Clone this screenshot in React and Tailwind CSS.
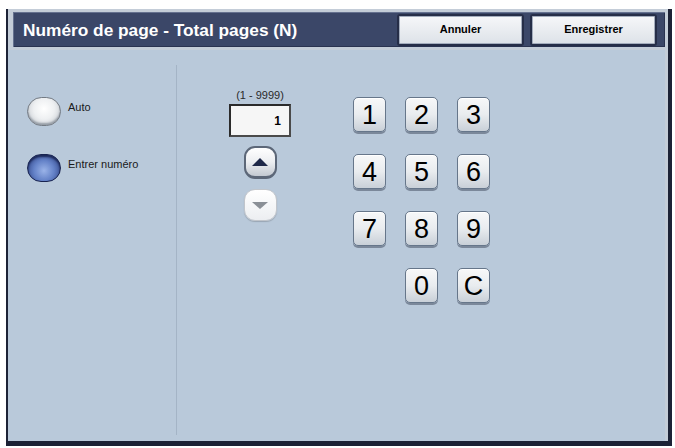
import React from 'react';

const keys = ['1', '2', '3', '4', '5', '6', '7', '8', '9'];

const Key = ({ label, className = '' }) => (
    <div className={`w-[33px] h-[35px] flex items-center justify-center rounded-[5px] border-[1.5px] border-[#66768a] bg-gradient-to-b from-[#f7f8f9] via-[#e9ecef] to-[#c9d0d8] shadow-[0_2px_0_#7b889a,inset_0_1px_0_#ffffff] text-[27px] leading-none text-black ${className}`}>
        <span className="pt-[2px]">{label}</span>
    </div>
);

const HeaderButton = ({ children }) => (
    <button className="w-[127px] h-[32px] rounded-[3px] border-2 border-[#262e48] bg-gradient-to-b from-[#f6f7f9] to-[#dde2e8] shadow-[inset_0_0_0_1px_#a4adbd] text-[11px] font-bold text-black">
        {children}
    </button>
);

export default function App() {
    return (
        <div className="w-[675px] h-[448px] bg-white pt-[9px] pl-[6px] font-['Liberation_Sans',Arial,sans-serif]">
            <div className="w-[666px] h-[437px] flex flex-col border-l-2 border-r-4 border-b-[5px] border-[#1c2236]">

                {/* title bar */}
                <div className="bg-[#c4cdd8] pt-[3px] pl-[5px] pr-[3px] pb-[3px]">
                    <div className="h-[35px] flex items-center justify-between pl-[10px] pr-[8px] bg-[#3b4768] shadow-[inset_1px_1px_0_#65718f,inset_-1px_-1px_0_#2a3350]">
                        <h1 className="text-white font-bold text-[17.3px] pt-[2px]">
                            Numéro de page - Total pages (N)
                        </h1>
                        <div className="flex gap-[6px]">
                            <HeaderButton>Annuler</HeaderButton>
                            <HeaderButton>Enregistrer</HeaderButton>
                        </div>
                    </div>
                </div>

                <div className="flex-1 flex bg-[#b9c9da] border-r-[3px] border-[#c4cdd8]">

                    {/* radio choices */}
                    <div className="w-[168px] pt-[47px] pl-[19px] flex flex-col gap-[28px]">
                        <div className="flex items-start gap-[7px]">
                            <div className="w-[34px] h-[29px] rounded-full border-[1.5px] border-[#737a83] bg-[radial-gradient(circle_at_50%_40%,#ffffff_0%,#eef0f2_45%,#bcc1c8_100%)] shadow-[inset_0_-2px_2px_#959ca5]" />
                            <span className="mt-[4px] text-[11px] leading-[13px] text-[#1a1a1a]">Auto</span>
                        </div>
                        <div className="flex items-start gap-[7px]">
                            <div className="w-[34px] h-[28px] rounded-full border-[1.5px] border-[#182350] bg-[radial-gradient(circle_at_50%_60%,#9ab3e8_0%,#6482c8_45%,#34498a_85%,#1e2c5e_100%)] shadow-[inset_0_2px_2px_#1b2757]" />
                            <span className="mt-[4px] text-[11px] leading-[13px] text-[#1a1a1a]">Entrer numéro</span>
                        </div>
                    </div>

                    <div className="w-px mt-[15px] mb-[6px] bg-[#a4b4c6]" />

                    {/* value entry */}
                    <div className="w-[166px] pt-[39px] flex flex-col items-center">
                        <span className="text-[11px] leading-[13px] text-[#2a2a2a]">(1 - 9999)</span>
                        <div className="mt-[2px] w-[62px] h-[33px] flex items-center justify-end pr-[8px] bg-[#f6f6f6] border-2 border-[#2b2b2b] border-b-[#4a4a4a] border-r-[#4a4a4a]">
                            <span className="text-[12px] font-bold text-black">1</span>
                        </div>
                        <button className="mt-[9px] w-[33px] h-[33px] flex items-center justify-center rounded-[11px] border-2 border-b-[3px] border-[#5c6778] bg-gradient-to-b from-[#ffffff] via-[#eceef1] to-[#c3c9d1]">
                            <svg width="16" height="8" viewBox="0 0 16 8">
                                <polygon points="8,0 16,8 0,8" fill="#1e2848" />
                            </svg>
                        </button>
                        <button className="mt-[10px] w-[33px] h-[32px] flex items-center justify-center rounded-[11px] border border-[#c1c5cb] bg-gradient-to-b from-[#ffffff] to-[#eceef1] shadow-[0_1px_1px_#9aa6b4]">
                            <svg width="16" height="7" viewBox="0 0 16 7">
                                <polygon points="0,0 16,0 8,7" fill="#8a8f96" />
                            </svg>
                        </button>
                    </div>

                    {/* keypad */}
                    <div className="ml-[10px] pt-[47px]">
                        <div className="grid grid-cols-[repeat(3,33px)] gap-x-[19px] gap-y-[22px]">
                            {keys.map(k => <Key key={k} label={k} />)}
                            <Key label="0" className="col-start-2" />
                            <Key label="C" />
                        </div>
                    </div>
                </div>
            </div>
        </div>
    );
}
